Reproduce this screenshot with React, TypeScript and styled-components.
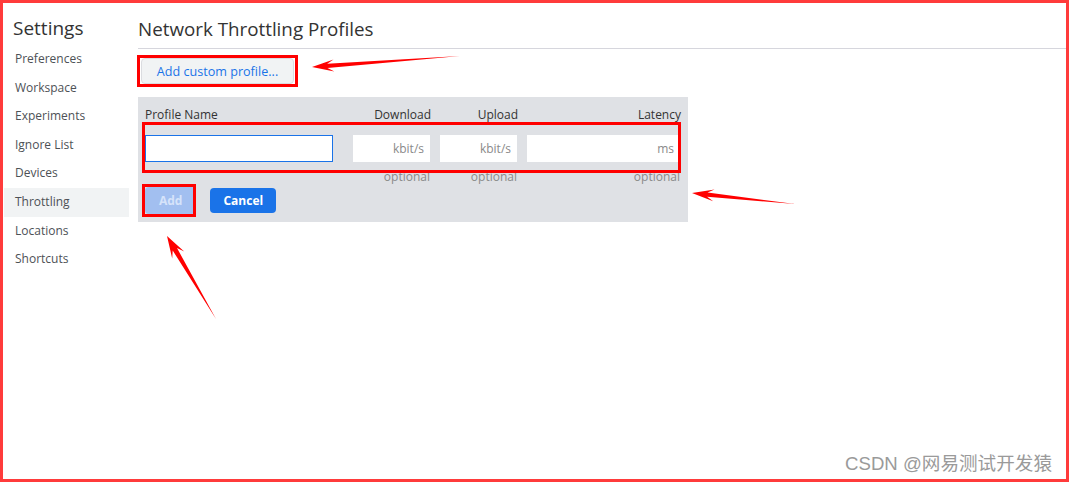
import React from "react";
import styled, { createGlobalStyle } from "styled-components";

const Global = createGlobalStyle`
  html, body { margin: 0; padding: 0; background: #fff; }
  body { font-family: "Open Sans", "Noto Sans", sans-serif; }
  * { box-sizing: border-box; }
`;

const Frame = styled.div`
  position: relative;
  width: 1069px;
  height: 482px;
  border: 3px solid #ff3b3b;
  display: flex;
  overflow: hidden;
  background: #fff;
`;

const Sidebar = styled.nav`
  width: 127px;
  flex: none;
  padding-top: 10px;
  display: flex;
  flex-direction: column;
`;

const SideTitle = styled.h1`
  margin: 0 0 0 10px;
  height: 32px;
  line-height: 30px;
  font-size: 19px;
  font-weight: 400;
  color: #333;
`;

const SideItem = styled.div<{ $active?: boolean }>`
  height: 28.6px;
  line-height: 28.6px;
  padding-left: 11px;
  font-size: 12px;
  color: #4d5156;
  background: ${(p) => (p.$active ? "#f1f3f4" : "transparent")};
  margin-left: 1px;
  margin-right: 1px;
`;

const Main = styled.main`
  flex: 1;
  padding-left: 8px;
  padding-top: 10px;
  display: flex;
  flex-direction: column;
  align-items: flex-start;
`;

const Header = styled.div`
  align-self: stretch;
  height: 36px;
  border-bottom: 1px solid #d6d6dd;
  display: flex;
  align-items: center;
  margin-bottom: 9px;
`;

const HeaderTitle = styled.h2`
  margin: 0;
  font-size: 18.8px;
  font-weight: 400;
  color: #333;
  position: relative;
  top: -2px;
`;

const SecondaryButton = styled.button`
  margin-left: 3px;
  height: 26px;
  width: 153px;
  border: 1px solid #dadce0;
  border-radius: 4px;
  background: #f1f3f4;
  color: #1a73e8;
  font-family: "Open Sans", "Noto Sans", sans-serif;
  font-size: 12.6px;
  font-weight: 500;
  padding: 0;
`;

const Panel = styled.div`
  margin-top: 13px;
  width: 550px;
  height: 125px;
  background: #dfe1e5;
  padding: 8px 8px 0 7px;
`;

const Grid = styled.div`
  display: grid;
  grid-template-columns: 198px 77px 77px 153px;
  column-gap: 10px;
`;

const ColHead = styled.div<{ $right?: boolean }>`
  height: 18px;
  line-height: 20px;
  font-size: 12px;
  color: #333;
  text-align: ${(p) => (p.$right ? "right" : "left")};
  margin-right: ${(p) => (p.$right ? "-1px" : "0")};
`;

const Field = styled.input<{ $focus?: boolean }>`
  margin-top: 12px;
  height: 27px;
  width: ${(p) => (p.$focus ? "188px" : "100%")};
  border: 1px solid ${(p) => (p.$focus ? "#1a73e8" : "#fff")};
  background: #fff;
  outline: none;
  text-align: right;
  padding: 0 5px;
  font-family: "Open Sans", "Noto Sans", sans-serif;
  font-size: 12px;
  color: #333;
  &::placeholder { color: #8a8a8a; opacity: 1; }
`;

const Hint = styled.div`
  height: 24px;
  padding-top: 4px;
  line-height: 22px;
  text-align: right;
  font-size: 12px;
  color: #8a8a8a;
`;

const Actions = styled.div`
  margin-top: 1px;
  display: flex;
  gap: 14px;
  align-items: center;
`;

const PrimaryButton = styled.button<{ $disabled?: boolean }>`
  height: ${(p) => (p.$disabled ? "27px" : "25px")};
  padding: 0 ${(p) => (p.$disabled ? "14px" : "13px")};
  border: none;
  border-radius: 4px;
  background: ${(p) => (p.$disabled ? "#a2bff0" : "#1a73e8")};
  color: ${(p) => (p.$disabled ? "#d6e3fa" : "#fff")};
  font-family: "Open Sans", "Noto Sans", sans-serif;
  font-size: 12px;
  font-weight: 700;
`;

const MarkBox = styled.div<{ $x: number; $y: number; $w: number; $h: number }>`
  position: absolute;
  left: ${(p) => p.$x - 3}px;
  top: ${(p) => p.$y - 3}px;
  width: ${(p) => p.$w}px;
  height: ${(p) => p.$h}px;
  border: 3px solid #ff0000;
  pointer-events: none;
`;

const Overlay = styled.svg`
  position: absolute;
  left: -3px;
  top: -3px;
  width: 1069px;
  height: 482px;
  pointer-events: none;
`;

const Watermark = styled.div`
  position: absolute;
  right: 14px;
  bottom: 4px;
  font-family: "Liberation Sans", "Noto Sans CJK SC", sans-serif;
  font-size: 18.6px;
  color: #9a9a9a;
`;

function arrow(tx: number, ty: number, hx: number, hy: number, headLen: number, headW: number, neckW: number) {
  const dx = hx - tx;
  const dy = hy - ty;
  const len = Math.hypot(dx, dy);
  const ux = dx / len;
  const uy = dy / len;
  const nx = -uy;
  const ny = ux;
  const bx = hx - ux * headLen;
  const by = hy - uy * headLen;
  const nbx = hx - ux * headLen * 0.7;
  const nby = hy - uy * headLen * 0.7;
  const pts = [
    [tx, ty],
    [nbx + nx * neckW, nby + ny * neckW],
    [bx + nx * headW, by + ny * headW],
    [hx, hy],
    [bx - nx * headW, by - ny * headW],
    [nbx - nx * neckW, nby - ny * neckW],
  ];
  return pts.map((p) => p.map((v) => v.toFixed(1)).join(",")).join(" ");
}

const items = ["Preferences", "Workspace", "Experiments", "Ignore List", "Devices", "Throttling", "Locations", "Shortcuts"];

export default function App() {
  return (
    <>
      <Global />
      <Frame>
        <Sidebar>
          <SideTitle>Settings</SideTitle>
          {items.map((t) => (
            <SideItem key={t} $active={t === "Throttling"}>
              {t}
            </SideItem>
          ))}
        </Sidebar>
        <Main>
          <Header>
            <HeaderTitle>Network Throttling Profiles</HeaderTitle>
          </Header>
          <SecondaryButton>Add custom profile...</SecondaryButton>
          <Panel>
            <Grid>
              <ColHead>Profile Name</ColHead>
              <ColHead $right>Download</ColHead>
              <ColHead $right>Upload</ColHead>
              <ColHead $right>Latency</ColHead>
              <Field $focus />
              <Field placeholder="kbit/s" />
              <Field placeholder="kbit/s" />
              <Field placeholder="ms" />
              <div />
              <Hint>optional</Hint>
              <Hint>optional</Hint>
              <Hint>optional</Hint>
            </Grid>
            <Actions>
              <PrimaryButton $disabled>Add</PrimaryButton>
              <PrimaryButton>Cancel</PrimaryButton>
            </Actions>
          </Panel>
        </Main>
        <MarkBox $x={137} $y={55} $w={161} $h={32} />
        <MarkBox $x={142} $y={122} $w={539} $h={51} />
        <MarkBox $x={142} $y={184} $w={54} $h={33} />
        <Overlay viewBox="0 0 1069 482">
          <polygon points={arrow(460, 56, 312, 67, 22, 6, 2.2)} fill="#ff0000" />
          <polygon points={arrow(216, 319, 167, 236, 22, 7, 2.5)} fill="#ff0000" />
          <polygon points={arrow(795, 204, 692, 193, 22, 6, 2.2)} fill="#ff0000" />
        </Overlay>
        <Watermark>CSDN @网易测试开发猿</Watermark>
      </Frame>
    </>
  );
}
